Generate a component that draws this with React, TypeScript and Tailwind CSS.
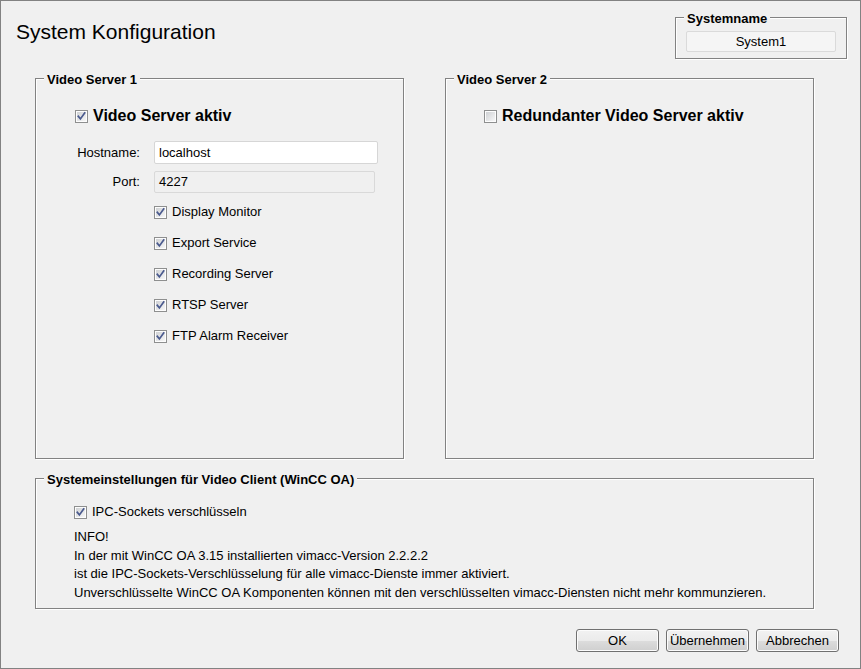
import React from 'react'

const font = { fontFamily: '"Liberation Sans", Arial, sans-serif' }

function CheckBox({ checked = false }: { checked?: boolean }) {
  return (
    <svg width="13" height="13" viewBox="0 0 13 13" className="shrink-0 block">
      <defs>
        <linearGradient id="cbfill" x1="0" y1="0" x2="1" y2="1">
          <stop offset="0" stopColor="#cfd1d4" />
          <stop offset="1" stopColor="#f7f7f7" />
        </linearGradient>
      </defs>
      <rect x="0.5" y="0.5" width="12" height="12" fill="#fdfdfd" stroke="#8e8f8f" />
      <rect x="2" y="2" width="9" height="9" fill="url(#cbfill)" />
      {checked && (
        <path d="M3.3 6.3 L5.4 8.9 L9.7 2.9" fill="none" stroke="#4a5a8e" strokeWidth="1.7" strokeLinecap="square" />
      )}
    </svg>
  )
}

function Group({ title, className, children }: { title: string; className: string; children?: React.ReactNode }) {
  return (
    <div
      className={`relative border border-[#828282] shadow-[inset_1px_1px_0_#ffffff,1px_1px_0_#ffffff] ${className}`}
    >
      <span className="absolute left-[8px] top-0 -translate-y-1/2 px-[3px] bg-[#f0f0f0] text-[13px] leading-[15px] font-bold text-black whitespace-nowrap">
        {title}
      </span>
      {children}
    </div>
  )
}

function CheckRow({ label, checked, className = '' }: { label: string; checked?: boolean; className?: string }) {
  return (
    <div className={`flex items-center gap-[5px] h-[18px] text-[13px] text-black ${className}`}>
      <CheckBox checked={checked} />
      <span>{label}</span>
    </div>
  )
}

function Button({ label }: { label: string }) {
  return (
    <button className="w-[83px] h-[23px] rounded-[3px] border border-[#707070] bg-[linear-gradient(#f2f2f2_0%,#ebebeb_50%,#dddddd_50%,#cfcfcf_100%)] shadow-[inset_0_0_0_1px_#fcfcfc] text-[13px] leading-[21px] text-black">
      {label}
    </button>
  )
}

export default function App() {
  const services = ['Display Monitor', 'Export Service', 'Recording Server', 'RTSP Server', 'FTP Alarm Receiver']

  return (
    <div
      className="w-[861px] h-[669px] border border-[#828282] bg-[#f0f0f0] flex flex-col text-black overflow-hidden"
      style={font}
    >
      {/* header */}
      <div className="h-[77px] flex justify-between shrink-0">
        <h1 className="pl-[15px] pt-[19px] text-[21px] leading-[24px] font-normal">System Konfiguration</h1>
        <Group title="Systemname" className="mt-[16px] mr-[13px] w-[172px] h-[42px]">
          <div className="ml-[10px] mt-[13px] w-[150px] h-[21px] rounded-[2px] border border-[#dadada] bg-[#f5f5f5] text-center text-[13px] leading-[19px]">
            System1
          </div>
        </Group>
      </div>

      {/* server groups */}
      <div className="flex gap-[41px] pl-[34px] shrink-0">
        <Group title="Video Server 1" className="w-[369px] h-[381px]">
          <div className="flex flex-col pl-[39px] pt-[27px]">
            <div className="flex items-center gap-[5px] h-[20px]">
              <CheckBox checked />
              <span className="text-[16px] font-bold leading-[20px]">Video Server aktiv</span>
            </div>
          </div>
          <div className="flex items-center mt-[15px]">
            <span className="w-[104px] text-right text-[13px]">Hostname:</span>
            <div className="ml-[14px] w-[224px] h-[23px] rounded-[2px] border border-[#d6d6d6] bg-white text-[13px] leading-[21px] pl-[4px]">
              localhost
            </div>
          </div>
          <div className="flex items-center mt-[7px]">
            <span className="w-[104px] text-right text-[13px]">Port:</span>
            <div className="ml-[14px] w-[221px] h-[22px] rounded-[2px] border border-[#d9d9d9] bg-[#f0f0f0] text-[13px] leading-[20px] pl-[4px]">
              4227
            </div>
          </div>
          <div className="flex flex-col gap-[13px] mt-[10px] pl-[118px]">
            {services.map(s => (
              <CheckRow key={s} label={s} checked />
            ))}
          </div>
        </Group>

        <Group title="Video Server 2" className="w-[369px] h-[381px]">
          <div className="flex pl-[38px] pt-[27px]">
            <div className="flex items-center gap-[5px] h-[20px]">
              <CheckBox />
              <span className="text-[16px] font-bold leading-[20px]">Redundanter Video Server aktiv</span>
            </div>
          </div>
        </Group>
      </div>

      {/* client settings */}
      <div className="pl-[34px] mt-[19px] shrink-0">
        <Group title="Systemeinstellungen für Video Client (WinCC OA)" className="w-[779px] h-[131px]">
          <div className="pl-[38px] pt-[24px]">
            <CheckRow label="IPC-Sockets verschlüsseln" checked />
            <div className="mt-[7px] text-[13px] leading-[18.5px]">
              <div>INFO!</div>
              <div>In der mit WinCC OA 3.15 installierten vimacc-Version 2.2.2.2</div>
              <div>ist die IPC-Sockets-Verschlüsselung für alle vimacc-Dienste immer aktiviert.</div>
              <div>Unverschlüsselte WinCC OA Komponenten können mit den verschlüsselten vimacc-Diensten nicht mehr kommunzieren.</div>
            </div>
          </div>
        </Group>
      </div>

      {/* buttons */}
      <div className="flex justify-end gap-[7px] pr-[21px] mt-[20px]">
        <Button label="OK" />
        <Button label="Übernehmen" />
        <Button label="Abbrechen" />
      </div>
    </div>
  )
}
